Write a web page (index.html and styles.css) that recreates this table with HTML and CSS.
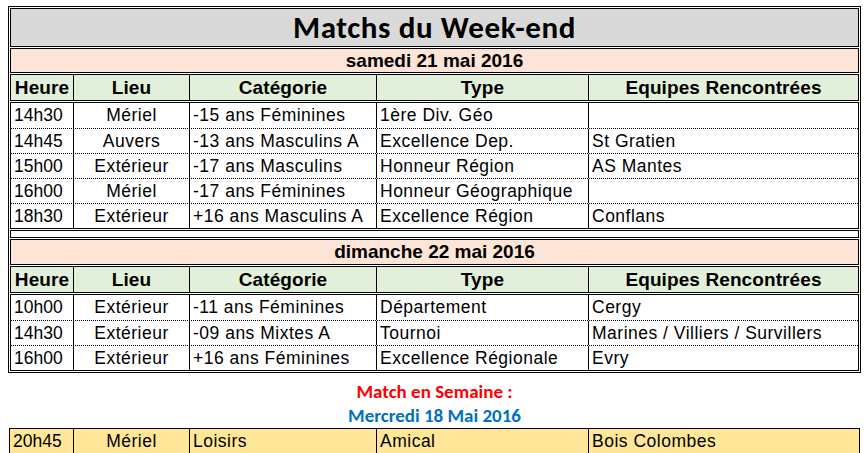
FILE: index.html
```html
<!DOCTYPE html>
<html lang="fr">
<head>
<meta charset="utf-8">
<title>Matchs du Week-end</title>
<link rel="stylesheet" href="styles.css">
</head>
<body>
<div class="page">
  <div class="frame">
    <div class="box title">Matchs du Week-end</div>

    <div class="box day">samedi 21 mai 2016</div>
    <div class="box grid head">
      <div class="c c1">Heure</div><div class="c c2">Lieu</div><div class="c c3">Catégorie</div><div class="c c4">Type</div><div class="c c5">Equipes Rencontrées</div>
    </div>
    <div class="box data">
      <div class="grid row"><div class="c c1">14h30</div><div class="c c2">Mériel</div><div class="c c3">-15 ans Féminines</div><div class="c c4">1ère Div. Géo</div><div class="c c5"></div></div>
      <div class="grid row"><div class="c c1">14h45</div><div class="c c2">Auvers</div><div class="c c3">-13 ans Masculins A</div><div class="c c4">Excellence Dep.</div><div class="c c5">St Gratien</div></div>
      <div class="grid row"><div class="c c1">15h00</div><div class="c c2">Extérieur</div><div class="c c3">-17 ans Masculins</div><div class="c c4">Honneur Région</div><div class="c c5">AS Mantes</div></div>
      <div class="grid row"><div class="c c1">16h00</div><div class="c c2">Mériel</div><div class="c c3">-17 ans Féminines</div><div class="c c4">Honneur Géographique</div><div class="c c5"></div></div>
      <div class="grid row"><div class="c c1">18h30</div><div class="c c2">Extérieur</div><div class="c c3">+16 ans Masculins A</div><div class="c c4">Excellence Région</div><div class="c c5">Conflans</div></div>
    </div>

    <div class="box spacer"></div>

    <div class="box day day2">dimanche 22 mai 2016</div>
    <div class="box grid head">
      <div class="c c1">Heure</div><div class="c c2">Lieu</div><div class="c c3">Catégorie</div><div class="c c4">Type</div><div class="c c5">Equipes Rencontrées</div>
    </div>
    <div class="box data">
      <div class="grid row"><div class="c c1">10h00</div><div class="c c2">Extérieur</div><div class="c c3">-11 ans Féminines</div><div class="c c4">Département</div><div class="c c5">Cergy</div></div>
      <div class="grid row"><div class="c c1">14h30</div><div class="c c2">Extérieur</div><div class="c c3">-09 ans Mixtes A</div><div class="c c4">Tournoi</div><div class="c c5">Marines / Villiers / Survillers</div></div>
      <div class="grid row"><div class="c c1">16h00</div><div class="c c2">Extérieur</div><div class="c c3">+16 ans Féminines</div><div class="c c4">Excellence Régionale</div><div class="c c5">Evry</div></div>
    </div>
  </div>

  <div class="week">
    <div class="week-label">Match en Semaine :</div>
    <div class="week-date">Mercredi 18 Mai 2016</div>
  </div>

  <div class="grid weekrow">
    <div class="c c1">20h45</div><div class="c c2">Mériel</div><div class="c c3">Loisirs</div><div class="c c4">Amical</div><div class="c c5">Bois Colombes</div>
  </div>
</div>
</body>
</html>
```

FILE: styles.css
```css
* { box-sizing: border-box; }

html, body {
  margin: 0;
  padding: 0;
  background: #ffffff;
}

body {
  font-family: "Liberation Sans", Arial, sans-serif;
  color: #000000;
}

.page {
  padding: 6px 0 0 8px;
  width: 868px;
}

.frame {
  width: 853px;
  border: 1px solid #000;
  padding: 1px;
  display: flex;
  flex-direction: column;
  gap: 1px;
}

.box {
  border: 1px solid #000;
}

.title {
  height: 39px;
  background: #d9d9d9;
  font-family: Carlito, Lato, "Open Sans", sans-serif;
  font-weight: 700;
  font-size: 31px;
  letter-spacing: 0.6px;
  line-height: 37px;
  text-align: center;
}

.day {
  height: 25px;
  background: #fce4d6;
  font-weight: 700;
  font-size: 19px;
  line-height: 23px;
  text-align: center;
}

.day2 {
  height: 26px;
  line-height: 24px;
}

.spacer {
  height: 8px;
}

.grid {
  display: grid;
  grid-template-columns: 62px 116px 187px 212px 1fr;
}

.head {
  height: 27px;
  background: #e2efda;
  font-weight: 700;
  font-size: 19px;
  letter-spacing: 0.1px;
  line-height: 25px;
}

.head .c {
  text-align: center;
}

.c {
  white-space: nowrap;
  overflow: hidden;
}

.c + .c {
  border-left: 1px solid #000;
}

.data {
  display: flex;
  flex-direction: column;
  font-size: 17.5px;
  letter-spacing: 0.5px;
}

.row {
  height: 25px;
  line-height: 25px;
}

.row + .row {
  border-top: 1px dotted #000;
  line-height: 24px;
}

.row .c1,
.weekrow .c1 {
  padding-left: 3px;
  letter-spacing: 0;
}

.row .c2,
.weekrow .c2 {
  text-align: center;
}

.row .c3,
.row .c4,
.row .c5,
.weekrow .c3,
.weekrow .c4,
.weekrow .c5 {
  padding-left: 3px;
}

.week {
  margin-top: 7px;
  width: 853px;
  text-align: center;
  font-family: Carlito, Lato, "Open Sans", sans-serif;
  font-weight: 700;
  font-size: 19px;
}

.week-label {
  height: 24px;
  line-height: 24px;
  color: #ff0000;
}

.week-date {
  height: 24px;
  line-height: 24px;
  color: #0070c0;
}

.weekrow {
  margin-left: 1px;
  width: 851px;
  height: 26px;
  border: 1px solid #000;
  background: #ffe699;
  font-size: 17.5px;
  letter-spacing: 0.5px;
  line-height: 24px;
  grid-template-columns: 63px 116px 187px 212px 1fr;
}
```
